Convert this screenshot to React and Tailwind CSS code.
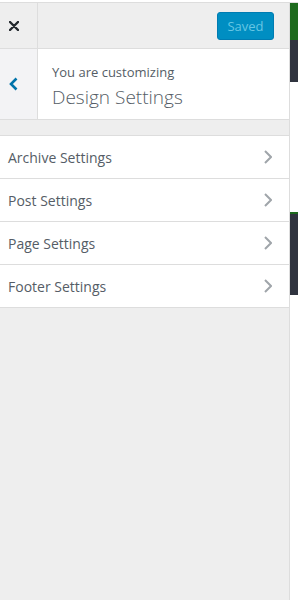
const sections = ["Archive Settings", "Post Settings", "Page Settings", "Footer Settings"];

export default function App() {
  return (
    <div
      className="w-[298px] h-[600px] bg-white pt-[2px] overflow-hidden"
      style={{ fontFamily: '"Open Sans", "Noto Sans", sans-serif' }}
    >
      <div className="flex h-[598px] border-t border-[#dddddd]">
        {/* sidebar */}
        <div className="w-[290px] shrink-0 bg-[#eeeeee] border-r border-[#dddddd] flex flex-col">
          {/* header */}
          <div className="flex h-[46px] border-b border-[#dddddd]">
            <div className="w-[38px] border-r border-[#dddddd] pl-[9px] pt-[18px]">
              <svg width="10" height="10" viewBox="0 0 10 10">
                <path d="M1 1 L9 9 M9 1 L1 9" stroke="#23282d" strokeWidth="2.4" strokeLinecap="round" />
              </svg>
            </div>
            <div className="flex-1 flex justify-end pt-[9px] pr-[15px]">
              <button className="w-[57px] h-[28px] rounded-[3px] bg-[#008ec2] border border-[#007cb2] text-[13px] text-[#66c6e4] leading-none">
                Saved
              </button>
            </div>
          </div>

          {/* back row */}
          <div className="flex h-[71px] border-b border-[#dddddd]">
            <div className="w-[38px] bg-[#f3f3f5] border-r border-[#dddddd] flex items-center pl-[9px]">
              <svg width="9" height="14" viewBox="0 0 9 14">
                <path d="M7.5 1.5 L2 7 L7.5 12.5" fill="none" stroke="#0073aa" strokeWidth="2.6" />
              </svg>
            </div>
            <div className="flex-1 bg-white pl-[14px] pt-[14px]">
              <div className="text-[13px] leading-[18px] text-[#555d66]">You are customizing</div>
              <div className="text-[19px] leading-[28px] text-[#555d66] font-light mt-[2px]">Design Settings</div>
            </div>
          </div>

          {/* sections */}
          <div className="mt-[15px] border-t border-[#dddddd]">
            {sections.map((s) => (
              <div
                key={s}
                className="h-[43px] bg-white border-b border-[#dddddd] flex items-center justify-between pl-[8px] pr-[17px]"
              >
                <span className="text-[14px] text-[#555d66]">{s}</span>
                <svg width="8" height="14" viewBox="0 0 8 14">
                  <path d="M1 1 L7 7 L1 13" fill="none" stroke="#a0a5aa" strokeWidth="2" />
                </svg>
              </div>
            ))}
          </div>
        </div>

        {/* preview strip */}
        <div className="flex-1 flex flex-col">
          <div className="h-[37px] bg-[#1d6a1d]" />
          <div className="h-[42px] bg-[#30343f]" />
          <div className="h-[130px]" />
          <div className="h-[2px] bg-[#1d6a1d]" />
          <div className="h-[81px] bg-[#30343f]" />
        </div>
      </div>
    </div>
  );
}
